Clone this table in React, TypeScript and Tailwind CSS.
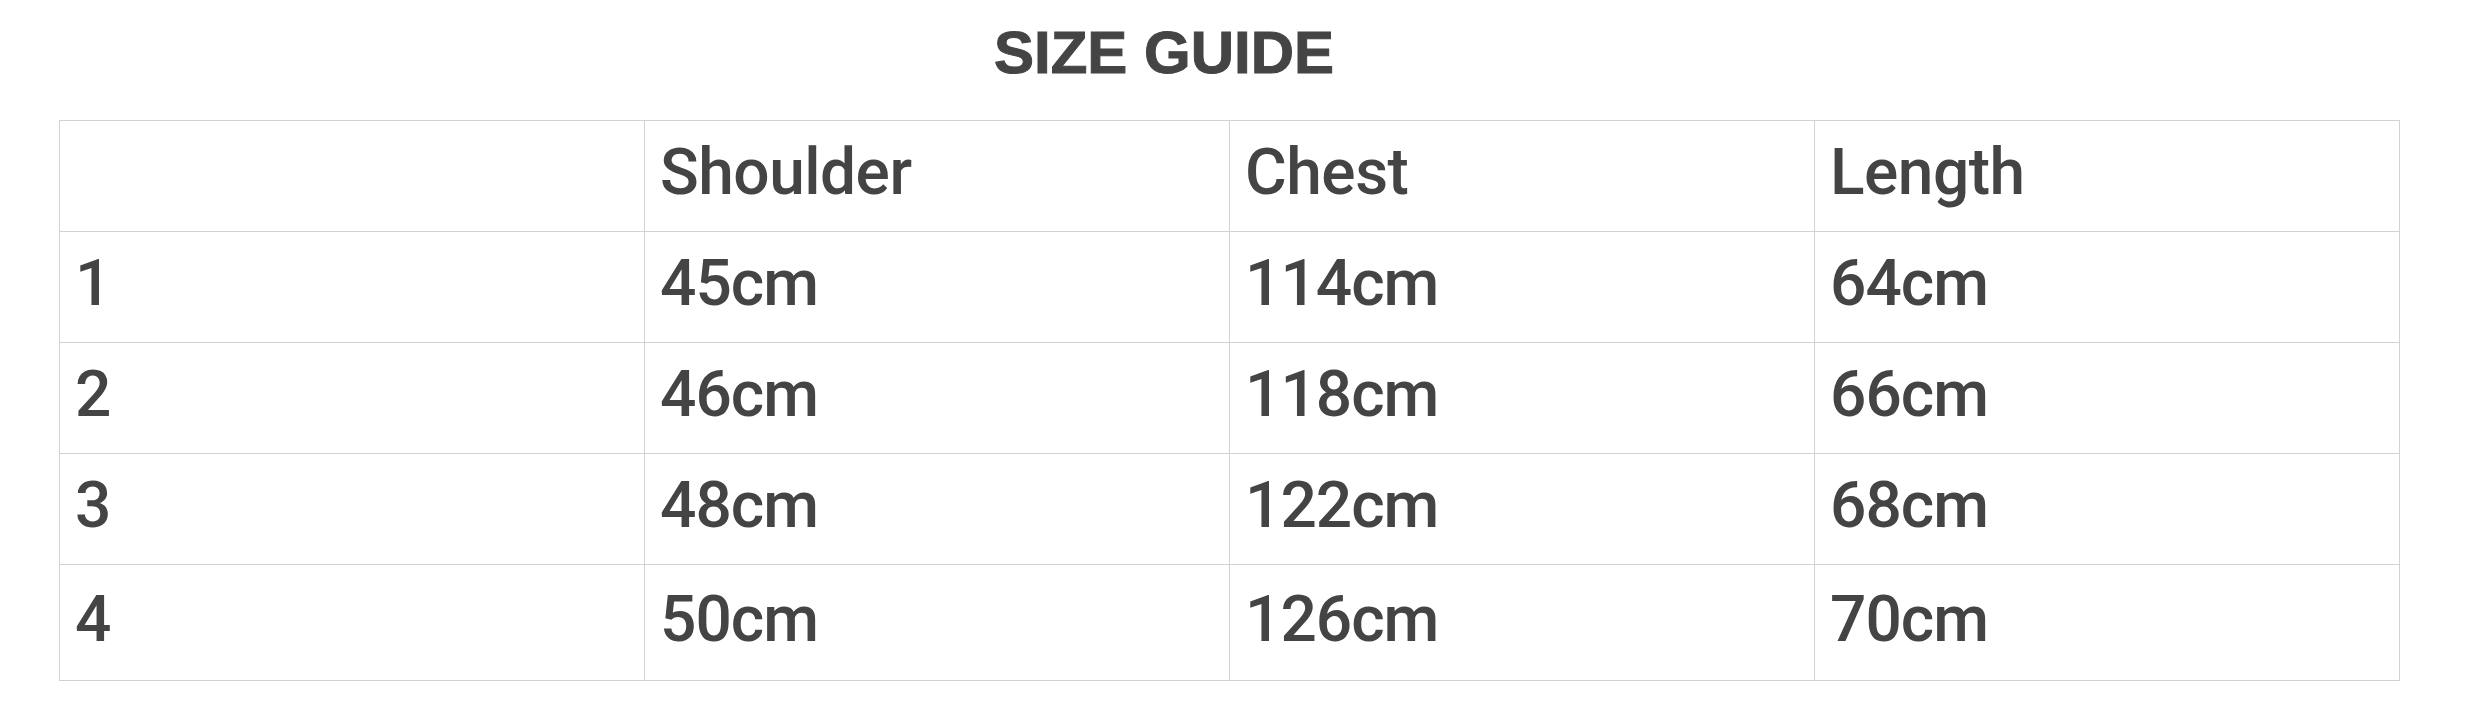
import React from 'react';

const headers = ['', 'Shoulder', 'Chest', 'Length'];

const rows = [
  ['1', '45cm', '114cm', '64cm'],
  ['2', '46cm', '118cm', '66cm'],
  ['3', '48cm', '122cm', '68cm'],
  ['4', '50cm', '126cm', '70cm'],
];

const App = () => {
  return (
    <div className="min-h-screen w-[2470px] bg-white text-[#444444] font-['Roboto',sans-serif]">
      {/* Title */}
      <div className="flex justify-center pr-[142px] pt-[18px] h-[120px]">
        <h1 className="font-['Liberation_Sans',Arial,sans-serif] font-bold text-[60px] leading-[70px] [-webkit-text-stroke:1px_#444444]">SIZE GUIDE</h1>
      </div>

      {/* Size table */}
      <div className="pl-[59px]">
        <table className="w-[2341px] table-fixed border-collapse">
          <tbody>
            <tr>
              {headers.map((h, i) => (
                <td
                  key={i}
                  className="h-[111px] border border-[#d2d2d2] pl-[15px] pb-[6px] align-middle text-[64px] font-medium tracking-[-0.5px] leading-none"
                >
                  {h}
                </td>
              ))}
            </tr>
            {rows.map((r, ri) => (
              <tr key={ri}>
                {r.map((c, ci) => (
                  <td
                    key={ci}
                    className={`${ri === rows.length - 1 ? 'h-[116px]' : 'h-[111px]'} border border-[#d2d2d2] pl-[15px] pb-[6px] align-middle text-[64px] font-medium tracking-[-1px] leading-none`}
                  >
                    {c}
                  </td>
                ))}
              </tr>
            ))}
          </tbody>
        </table>
      </div>
    </div>
  );
};

export default App;
